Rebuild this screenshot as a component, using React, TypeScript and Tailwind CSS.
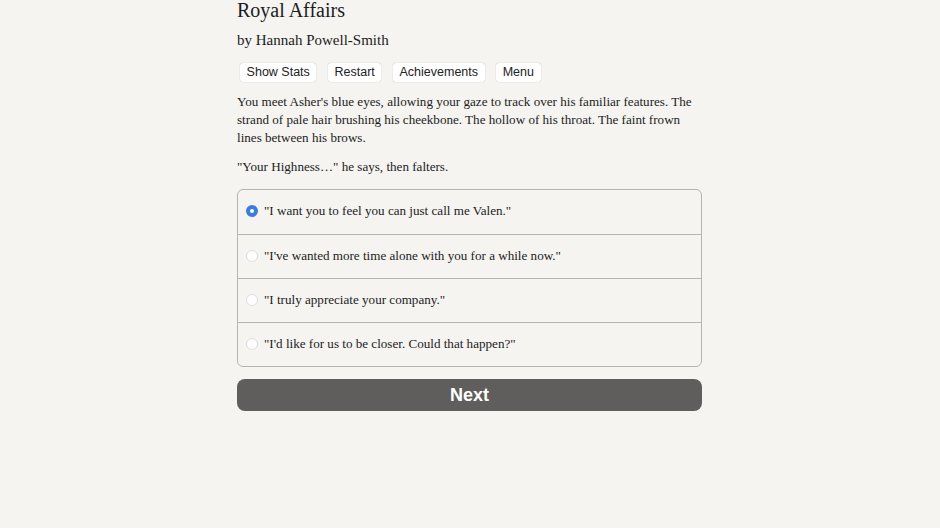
import { useState } from "react";

const CHOICES = [
  "\"I want you to feel you can just call me Valen.\"",
  "\"I've wanted more time alone with you for a while now.\"",
  "\"I truly appreciate your company.\"",
  "\"I'd like for us to be closer. Could that happen?\"",
];

const serif = "font-['Liberation_Serif',serif]";
const sans = "font-['Liberation_Sans',Arial,sans-serif]";

export default function App() {
  const [picked, setPicked] = useState(0);

  return (
    <div className={`min-h-screen bg-[#f5f4f1] text-[#1c1c1c] ${serif}`}>
      <div className="ml-[237px] w-[465px]">
        <h1 className="-mt-[1px] text-[20px] leading-[22px]">Royal Affairs</h1>
        <p className="mt-[10px] text-[15px] leading-[18px]">by Hannah Powell-Smith</p>

        <div className={`mt-[14px] flex gap-[11.5px] pl-[3px] text-[12.5px] ${sans}`}>
          {["Show Stats", "Restart", "Achievements", "Menu"].map((b) => (
            <button key={b} className="h-[19px] rounded-[3px] bg-white px-[6.6px] leading-[19px] text-[#222] shadow-[0_0_1px_rgba(0,0,0,0.35)]">
              {b}
            </button>
          ))}
        </div>

        <div className="mt-[11px] text-[13.1px] leading-[18px]">
          <p>You meet Asher's blue eyes, allowing your gaze to track over his familiar features. The strand of pale hair brushing his cheekbone. The hollow of his throat. The faint frown lines between his brows.</p>
          <p className="mt-[11px]">"Your Highness…" he says, then falters.</p>
        </div>

        <div className="mt-[13px] overflow-hidden rounded-[6px] border border-[#b5b4b1] text-[13.1px]">
          {CHOICES.map((c, i) => (
            <label
              key={c}
              onClick={() => setPicked(i)}
              className={`flex h-[44px] cursor-pointer items-center gap-[6px] pb-[2px] pl-[8px] ${i > 0 ? "border-t border-[#b5b4b1]" : ""}`}
            >
              {picked === i ? (
                <span className="grid h-[12px] w-[12px] place-items-center rounded-full bg-[#3b7ddd]">
                  <span className="h-[4px] w-[4px] rounded-full bg-white" />
                </span>
              ) : (
                <span className="h-[12px] w-[12px] rounded-full border border-[#dcdcdc] bg-white" />
              )}
              <span>{c}</span>
            </label>
          ))}
        </div>

        <button className={`mt-[12px] h-[32px] w-full rounded-[8px] bg-[#5f5e5c] pt-[1px] text-[18px] font-bold text-white ${sans}`}>
          Next
        </button>
      </div>
    </div>
  );
}
